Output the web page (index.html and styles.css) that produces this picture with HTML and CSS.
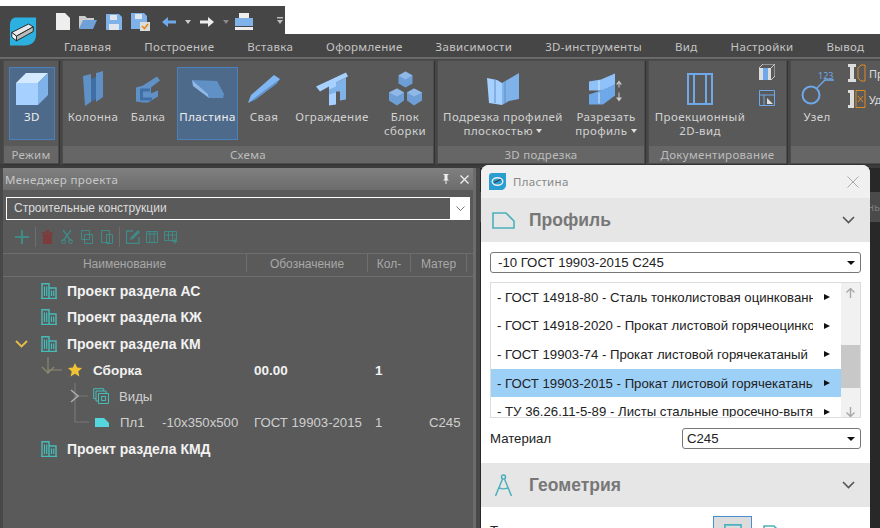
FILE: index.html
```html
<!DOCTYPE html>
<html lang="ru">
<head>
    <meta charset="UTF-8">
    <title>Менеджер проекта</title>
    <link rel="stylesheet" href="styles.css">
</head>
<body>
    <svg width="0" height="0" class="defs">
        <symbol id="building" viewBox="0 0 16 16">
            <path d="M1 15.500V.8h7v14.700M8 5h7v10.500M0 15.500h16" fill="none" stroke="#45bcb8" stroke-width="1.400"/>
            <path d="M3.500 3.500v9.500M5.700 3.500v9.500M10.500 7.500v5.500M12.700 7.500v5.500" stroke="#45bcb8" stroke-width="1.200"/>
        </symbol>
    </svg>

    <div class="qat">
        <svg class="logo" width="28" height="31" viewBox="0 0 30 32">
            <path d="M7 1h22v18c0 7-4 12-12 12H1V10C1 5 3 1 7 1z" fill="#2bb0e0"/>
            <path d="M3 17l18-9 5 3-18 10z" fill="#e8e8e8" stroke="#222" stroke-width="1"/>
            <path d="M3 17l5 4v5l-5-4z" fill="#fff" stroke="#222" stroke-width="1"/>
            <path d="M8 26l18-10v-5L8 21z" fill="#bbb" stroke="#222" stroke-width="1"/>
        </svg>
        <svg width="14" height="17" viewBox="0 0 14 17"><path d="M0 0h9l5 5v12H0z" fill="#eee"/></svg>
        <svg width="18" height="14" viewBox="0 0 18 14"><path d="M0 14V1h6l2 2h7v2H5z" fill="#ccc"/><path d="M0 14l4-9h14l-4 9z" fill="#6fa0d8"/></svg>
        <svg width="16" height="16" viewBox="0 0 16 16"><path d="M0 0h13l3 3v13H0z" fill="#7fb2e8"/><path d="M4 1h7v5H4zM3 10h10v6H3z" fill="#e0e6ee"/></svg>
        <svg width="19" height="18" viewBox="0 0 19 18"><path d="M0 0h13l3 3v13H0z" fill="#7fb2e8"/><path d="M4 1h7v5H4z" fill="#e0e6ee"/><path d="M9 9h10v9H9z" fill="#ddd"/><path d="M11 13l2.500 2.500L17 11" fill="none" stroke="#e08a1e" stroke-width="1.600"/></svg>
        <svg class="back" width="14" height="10" viewBox="0 0 14 10"><path d="M0 5l6-5v3.500h8v3H6V10z" fill="#6fa8e8"/></svg>
        <span class="drop"></span>
        <svg width="14" height="10" viewBox="0 0 14 10"><path d="M14 5L8 0v3.500H0v3h8V10z" fill="#eee"/></svg>
        <span class="drop dim"></span>
        <svg class="printer" width="18" height="17" viewBox="0 0 18 17"><path d="M4 0h10v5H4z" fill="#eee"/><path d="M0 5h18v8H0z" fill="#7fb2e8"/><path d="M0 14h18v3H0z" fill="#eee"/></svg>
        <svg class="more" width="6" height="9" viewBox="0 0 6 9"><path d="M0 0h6v1.500H0zM0 3h6L3 7z" fill="#bbb"/></svg>
    </div>

    <nav class="tabs">
        <span>Главная</span>
        <span>Построение</span>
        <span>Вставка</span>
        <span>Оформление</span>
        <span>Зависимости</span>
        <span>3D-инструменты</span>
        <span>Вид</span>
        <span>Настройки</span>
        <span>Вывод</span>
    </nav>

    <div class="ribbon">
        <section class="group group-mode">
            <div class="tools">
                <div class="tool active w46">
                    <svg width="32" height="32" viewBox="0 0 32 32"><path d="M0 10L10 0h22L22 10z" fill="#d5e9ff"/><path d="M0 10h22v22H0z" fill="#a6d0ff"/><path d="M22 10L32 0v22L22 32z" fill="#7fb2e8"/></svg>
                    <span>3D</span>
                </div>
            </div>
            <div class="caption">Режим</div>
        </section>

        <section class="group group-scheme">
            <div class="tools">
                <div class="tool w52">
                    <svg width="22" height="36" viewBox="0 0 22 36"><path d="M1 5l8-2v28l-6 4z" fill="#5f90c6"/><path d="M9 8l5-2v22l-5 3z" fill="#3f6fa5"/><path d="M14 2l7-2v26l-7 5z" fill="#5f90c6"/></svg>
                    <span>Колонна</span>
                </div>
                <div class="tool w58">
                    <svg width="26" height="27" viewBox="0 0 26 27"><path d="M1 12l7-2 14-9 3 4-9 7v6l7-3v6l-10 6H8L1 26z" fill="#5f90c6"/><path d="M5 13h10v3H8v6h9v3H5z" fill="#3f6fa5"/></svg>
                    <span>Балка</span>
                </div>
                <div class="tool active w61">
                    <svg width="33" height="18" viewBox="0 0 33 18"><path d="M1 0l25 1 7 13-1 4H18l-1-4z" fill="#5f90c6"/><path d="M1 0l16 14 1 4L2 6z" fill="#8fb8e6"/></svg>
                    <span>Пластина</span>
                </div>
                <div class="tool w52">
                    <svg width="32" height="28" viewBox="0 0 32 28"><path d="M0 28l3-8L26 0l6 4-4 5-20 15z" fill="#80b6f2"/><path d="M0 28l8-4L28 9l4-5z" fill="#5f90c6"/></svg>
                    <span>Свая</span>
                </div>
                <div class="tool w84">
                    <svg width="32" height="33" viewBox="0 0 32 33"><path d="M0 14L30 0l2 4-12 6v22l-7 1V14l-9 5z" fill="#a6d0ff"/><path d="M20 10l10-5v22l-6 1v-9h-4zM13 17l7-3v6l-7 2z" fill="#7fb2e8"/></svg>
                    <span>Ограждение</span>
                </div>
                <div class="tool-sep"></div>
                <div class="tool w54">
                    <svg width="33" height="35" viewBox="0 0 33 35"><path d="M16.500 0l7 4v8l-7 4-7-4V4z" fill="#6d9fd6"/><path d="M8 17l7 4v8l-7 5-8-5v-8z" fill="#6d9fd6"/><path d="M25 17l8 4v8l-8 5-7-5v-8z" fill="#6d9fd6"/><path d="M16.500 0l7 4-7 4-7-4zM8 17l7 4-7 4-8-4zM25 17l8 4-8 4-7-4z" fill="#8fb8e6"/></svg>
                    <span>Блок<br>сборки</span>
                </div>
            </div>
            <div class="caption">Схема</div>
        </section>

        <section class="group group-cut">
            <div class="tools">
                <div class="tool w124">
                    <svg width="32" height="32" viewBox="0 0 32 32"><path d="M0 5l10 2 5 3v22L2 30z" fill="#a6d0ff"/><path d="M15 10l17-10v26l-10 2-7 4z" fill="#7fb2e8"/><path d="M8 6v24M18 8v22" stroke="#5f90c6"/></svg>
                    <span>Подрезка профилей<br>плоскостью <i class="caret"></i></span>
                </div>
                <div class="tool w72">
                    <svg width="34" height="31" viewBox="0 0 34 31"><path d="M0 8l12-2 14-6v11L14 17H0z" fill="#8fc2fa"/><path d="M0 21l12-4 14-6v11l-12 9H0z" fill="#6fa8e8"/><path d="M10 7v10M10 19v11" stroke="#d5e9ff"/><path d="M30 7l-3 4h6zM30 28l-3-4h6z M29.500 10h1v4h-1zM29.500 19h1v6h-1z" fill="#ccc"/></svg>
                    <span>Разрезать<br>профиль <i class="caret"></i></span>
                </div>
            </div>
            <div class="caption">3D подрезка</div>
        </section>

        <section class="group group-doc">
            <div class="tools">
                <div class="tool w100">
                    <svg width="26" height="32" viewBox="0 0 26 32"><path d="M1 1h24v30H1zM7 1v30M19 1v30" fill="none" stroke="#6fa8e8" stroke-width="2"/></svg>
                    <span>Проекционный<br>2D-вид</span>
                </div>
                <div class="mini">
                    <svg width="16" height="16" viewBox="0 0 16 16"><path d="M0 4h12v12H0z" fill="#ddd"/><path d="M4 4h5v12H4z" fill="#6fa8e8"/><path d="M0 4l4-4h12v12l-4 4M12 4l4-4" fill="none" stroke="#ccc"/></svg>
                    <svg width="16" height="16" viewBox="0 0 16 16"><path d="M.5.500h15v15H.500zM.5 5h15M5 5v10" fill="none" stroke="#6fa8e8"/><path d="M8 14V8l6 6z" fill="#ddd"/></svg>
                </div>
            </div>
            <div class="caption">Документирование</div>
        </section>

        <section class="group group-node">
            <div class="tools">
                <div class="tool w46">
                    <div class="node-icon">
                        <svg width="33" height="32" viewBox="0 0 33 32"><circle cx="10" cy="22" r="8.500" fill="none" stroke="#6fa8e8" stroke-width="2"/><path d="M16 15l8-8h9" fill="none" stroke="#6fa8e8" stroke-width="1.300"/></svg>
                        <b class="node-num">123</b>
                    </div>
                    <span>Узел</span>
                </div>
                <div class="side-list">
                    <div><svg width="18" height="18" viewBox="0 0 18 18"><path d="M0 0h8v3H6v12h2v3H0v-3h2V3H0z" fill="#ddd"/><path d="M17 1h-4l-3 3v10l3 3h4z" fill="none" stroke="#e08a1e"/></svg>Пр</div>
                    <div><svg width="18" height="18" viewBox="0 0 18 18"><path d="M0 0h6v18H0v-3h2V3H0z" fill="#ddd"/><path d="M8 .500h9v17H8zM10 6l5 6M15 6l-5 6" fill="none" stroke="#e08a1e"/></svg>Уд</div>
                </div>
            </div>
            <div class="caption"></div>
        </section>
    </div>

    <div class="workspace">
        <aside class="panel">
            <div class="panel-title">
                <span>Менеджер проекта</span>
                <svg width="10" height="10" viewBox="0 0 10 10"><path d="M2.500 0h5v1h-1v4l1.500 1.500H2L3.500 5V1h-1zM4.500 6.500h1V10h-1z" fill="#eee"/></svg>
                <svg width="9" height="9" viewBox="0 0 9 9"><path d="M.5.500l8 8M8.500.500l-8 8" stroke="#eee" stroke-width="1.300"/></svg>
            </div>

            <div class="combo">
                <span>Строительные конструкции</span>
                <div class="combo-btn"><svg width="9" height="6" viewBox="0 0 9 6"><path d="M.5.500l4 4 4-4" fill="none" stroke="#777"/></svg></div>
            </div>

            <div class="toolbar">
                <svg width="14" height="14" viewBox="0 0 14 14"><path d="M7 0v14M0 7h14" stroke="#3f8b88" stroke-width="2"/></svg>
                <div class="bar-sep"></div>
                <svg width="11" height="14" viewBox="0 0 11 14"><path d="M0 2h11v1.500H0zM1 4h9v10H1z M4 0h3v2H4z" fill="#7a3c3c"/></svg>
                <svg width="12" height="14" viewBox="0 0 12 14"><path d="M2 0l8 11M10 0L2 11" stroke="#3f8b88" stroke-width="1.300"/><circle cx="2.500" cy="11.500" r="2" fill="none" stroke="#3f8b88"/><circle cx="9.500" cy="11.500" r="2" fill="none" stroke="#3f8b88"/></svg>
                <svg width="12" height="14" viewBox="0 0 12 14"><path d="M.5.500h8v9h-8zM3.500 4.500h8v9h-8z" fill="#5a5a5a" stroke="#3f8b88"/></svg>
                <svg width="12" height="14" viewBox="0 0 12 14"><path d="M.5.500h8v12h-8zM5.500 4.500h6v9h-6z" fill="#5a5a5a" stroke="#3f8b88"/></svg>
                <div class="bar-sep"></div>
                <svg width="14" height="14" viewBox="0 0 14 14"><path d="M13 7v6.500H.5V1H7" fill="none" stroke="#3f8b88" stroke-width="1.300"/><path d="M4 10l1-3 7-7 2 2-7 7z" fill="#3f8b88"/></svg>
                <svg class="tight" width="12" height="14" viewBox="0 0 12 14"><path d="M.5 1.500h11v11H.5zM4 1.500v11M8 1.500v11M.5 4h11" fill="none" stroke="#3f8b88"/></svg>
                <svg class="tight" width="14" height="14" viewBox="0 0 14 14"><path d="M.5 1.500h12v9H.5zM.5 5h12M4.500 1.500v9M8.500 1.500v9M11 8v6M8.500 11.500h5" fill="none" stroke="#3f8b88"/></svg>
            </div>

            <div class="head">
                <div>Наименование</div>
                <div>Обозначение</div>
                <div>Кол-</div>
                <div class="clip">Матер</div>
            </div>

            <div class="tree">
                <div class="row bold">
                    <div class="name"><span class="slot l0"></span><svg class="ico" width="16" height="16"><use href="#building"/></svg><span>Проект раздела АС</span></div>
                </div>
                <div class="row bold">
                    <div class="name"><span class="slot l0"></span><svg class="ico" width="16" height="16"><use href="#building"/></svg><span>Проект раздела КЖ</span></div>
                </div>
                <div class="row bold">
                    <div class="name">
                        <span class="slot l0"><svg class="chevron" width="13" height="8" viewBox="0 0 13 8"><path d="M1 1l5.500 5.500L12 1" fill="none" stroke="#e6bd4a" stroke-width="1.800"/></svg></span>
                        <svg class="ico" width="16" height="16"><use href="#building"/></svg><span>Проект раздела КМ</span>
                    </div>
                </div>
                <div class="row bold sub">
                    <div class="name">
                        <span class="slot l1"><svg class="link" width="65" height="26" viewBox="0 0 65 26"><path d="M45 0v17M45 13h14M39 10l6 6 6-6" fill="none" stroke="#8c8a70" stroke-width="1.200"/></svg></span>
                        <svg class="star" width="14" height="14" viewBox="0 0 14 14"><path d="M7 0l2.100 4.600 4.900.5-3.700 3.300 1.100 5L7 10.800l-4.400 2.600 1.100-5L0 5.100l4.900-.5z" fill="#f1c232"/></svg>
                        <span>Сборка</span>
                    </div>
                    <div>00.00</div>
                    <div>1</div>
                    <div></div>
                </div>
                <div class="row">
                    <div class="name">
                        <span class="slot l2"><svg class="link" width="90" height="26" viewBox="0 0 90 26"><path d="M72 0v26M72 13h13" fill="none" stroke="#777" stroke-width="1.200"/><path d="M68 7l7 6-7 6" fill="none" stroke="#aaa" stroke-width="1.600"/></svg></span>
                        <svg class="ico-view" width="16" height="16" viewBox="0 0 16 16"><path d="M.7.700h10v10H.700z" fill="none" stroke="#45bcb8"/><path d="M3 3h10v10H3z" fill="#5a5a5a" stroke="#45bcb8"/><path d="M5.500 5.500h10v10h-10z" fill="#5a5a5a" stroke="#45bcb8"/><path d="M8.500 8.500h4v4h-4z" fill="none" stroke="#45bcb8"/></svg>
                        <span>Виды</span>
                    </div>
                </div>
                <div class="row">
                    <div class="name">
                        <span class="slot l2"><svg class="link" width="90" height="26" viewBox="0 0 90 26"><path d="M72 0v13h14" fill="none" stroke="#777" stroke-width="1.200"/></svg></span>
                        <svg class="ico-plate" width="14" height="9" viewBox="0 0 14 9"><path d="M0 0h9l5 5v4H0z" fill="#54d6dc"/></svg>
                        <span class="mark">Пл1</span><span>-10x350x500</span>
                    </div>
                    <div>ГОСТ 19903-2015</div>
                    <div>1</div>
                    <div class="mat">С245</div>
                </div>
                <div class="row bold">
                    <div class="name"><span class="slot l0"></span><svg class="ico" width="16" height="16"><use href="#building"/></svg><span>Проект раздела КМД</span></div>
                </div>
            </div>
        </aside>
        <main class="canvas">
            <div class="canvas-tab">нь</div>
        </main>
    </div>

    <div class="dialog">
        <div class="dlg-title">
            <svg width="17" height="17" viewBox="0 0 16 16"><path d="M3 0h13v11c0 3-2 5-5 5H0V3c0-2 1-3 3-3z" fill="#2a9ed0"/><ellipse cx="8" cy="8" rx="5" ry="3.500" fill="none" stroke="#eee" stroke-width="1.300"/><path d="M5 9l6-3" stroke="#333"/></svg>
            <span>Пластина</span>
            <svg class="dlg-close" width="12" height="12" viewBox="0 0 12 12"><path d="M.5.500l11 11M11.500.500l-11 11" stroke="#aaa"/></svg>
        </div>

        <div class="sect">
            <svg width="23" height="17" viewBox="0 0 23 17"><path d="M1 1h13l8 8v7H1z" fill="none" stroke="#4cb0bc" stroke-width="1.600"/></svg>
            <span>Профиль</span>
            <svg class="sect-arrow" width="13" height="8" viewBox="0 0 13 8"><path d="M1 1l5.500 5.500L12 1" fill="none" stroke="#555" stroke-width="1.600"/></svg>
        </div>

        <div class="dlg-body">
            <div class="select full"><span>-10 ГОСТ 19903-2015 С245</span><i></i></div>

            <div class="list">
                <div class="items">
                    <div class="item"><span>- ГОСТ 14918-80 - Сталь тонколистовая оцинкованная</span><i></i></div>
                    <div class="item"><span>- ГОСТ 14918-2020 - Прокат листовой горячеоцинкованный</span><i></i></div>
                    <div class="item"><span>- ГОСТ 19903-74 - Прокат листовой горячекатаный</span><i></i></div>
                    <div class="item sel"><span>- ГОСТ 19903-2015 - Прокат листовой горячекатаный</span><i></i></div>
                    <div class="item"><span>- ТУ 36.26.11-5-89 - Листы стальные просечно-вытяжные</span><i></i></div>
                </div>
                <div class="scroll">
                    <svg width="9" height="10" viewBox="0 0 9 10"><path d="M4.500 10V1M.5 4.500l4-4 4 4" fill="none" stroke="#a8a8a8" stroke-width="1.400"/></svg>
                    <div class="thumb"></div>
                    <svg width="9" height="10" viewBox="0 0 9 10"><path d="M4.500 0v9M.5 5.500l4 4 4-4" fill="none" stroke="#a8a8a8" stroke-width="1.400"/></svg>
                </div>
            </div>

            <div class="field">
                <span>Материал</span>
                <div class="select"><span>С245</span><i></i></div>
            </div>
        </div>

        <div class="sect">
            <svg width="23" height="22" viewBox="0 0 20 22"><circle cx="10" cy="3" r="2" fill="none" stroke="#4cb0bc" stroke-width="1.500"/><path d="M9 5L2 22M11 5l7 17M6 14c2 1 6 1 8 0" fill="none" stroke="#4cb0bc" stroke-width="1.500"/></svg>
            <span>Геометрия</span>
            <svg class="sect-arrow" width="13" height="8" viewBox="0 0 13 8"><path d="M1 1l5.500 5.500L12 1" fill="none" stroke="#555" stroke-width="1.600"/></svg>
        </div>

        <div class="dlg-last">
            <span>Тип</span>
            <div class="toggle"><svg width="18" height="18" viewBox="0 0 20 20"><path d="M1 1h18v18H1z" fill="none" stroke="#4cb0bc" stroke-width="1.800"/></svg></div>
            <svg class="toggle-2" width="20" height="20" viewBox="0 0 20 20"><path d="M1 1h10l8 8v10H1z" fill="none" stroke="#4cb0bc" stroke-width="1.600"/></svg>
        </div>
    </div>
</body>
</html>
```

FILE: styles.css
```css
* {
    margin: 0;
    padding: 0;
    box-sizing: border-box;
}

body {
    width: 880px;
    height: 528px;
    background: #fff;
    overflow: hidden;
    position: relative;
    font-family: 'Noto Sans', sans-serif;
    display: flex;
    flex-direction: column;
}

svg {
    display: block;
    flex-shrink: 0;
}

.defs {
    position: absolute;
}

/* title bar */
.qat {
    margin-top: 6px;
    width: 285px;
    height: 28px;
    background: #464646;
    display: flex;
    align-items: center;
    gap: 9px;
    padding-left: 9px;
    padding-top: 3px;
}

.logo {
    align-self: flex-start;
    margin: 7px 10px 0 0;
    position: relative;
    z-index: 1;
}

.back {
    margin-left: 3px;
}

.printer {
    margin-left: -3px;
}

.drop {
    width: 0;
    height: 0;
    border: 3px solid transparent;
    border-top: 4px solid #ccc;
    border-bottom: 0;
}

.drop.dim {
    border-top-color: #888;
}

.more {
    margin-left: 15px;
}

/* tabs */
.tabs {
    height: 25px;
    background: #464646;
    display: flex;
    align-items: center;
    gap: 33px;
    padding: 2px 0 0 64px;
    font-size: 11.5px;
    letter-spacing: .3px;
    color: #c4c4c4;
    white-space: nowrap;
    border-bottom: 2px solid #6a6a6a;
}

/* ribbon */
.ribbon {
    height: 109px;
    background: #464646;
    display: flex;
    gap: 3px;
    padding: 1px 0 0 3px;
    border-bottom: 4px solid #3c3c3c;
}

.group {
    background: #595959;
    display: flex;
    flex-direction: column;
    flex-shrink: 0;
    border: 1px solid #4c4c4c;
    box-shadow: 1px 1px 0 #333;
}

.group-mode { width: 56px; }
.group-scheme { width: 372px; }
.group-cut { width: 208px; }
.group-doc { width: 139px; }
.group-node { width: 100px; }

.tools {
    flex: 1;
    display: flex;
    padding: 6px 5px 5px;
}

.group-scheme .tools {
    padding-left: 4px;
}

.group-cut .tools {
    padding-left: 3px;
    gap: 5px;
}

.group-doc .tools {
    padding-left: 1px;
}

.group-node .tools {
    padding-left: 3px;
}

.caption {
    height: 17px;
    background: #666;
    color: #bdbdbd;
    font-size: 11.5px;
    letter-spacing: .3px;
    line-height: 17px;
    text-align: center;
}

.tool {
    height: 73px;
    display: flex;
    flex-direction: column;
    align-items: center;
    color: #d2d2d2;
    font-size: 11.5px;
    letter-spacing: .4px;
    line-height: 14px;
    text-align: center;
    border: 1px solid transparent;
    white-space: nowrap;
    flex-shrink: 0;
}

.tool svg {
    height: 36px;
    margin: 3px 0;
}

.tool.active {
    background: #4e6a8a;
    border-color: #4a80bd;
    color: #eee;
}

.w46 { width: 46px; }
.w52 { width: 52px; }
.w54 { width: 54px; }
.w58 { width: 58px; }
.w61 { width: 61px; }
.w72 { width: 72px; }
.w84 { width: 84px; }
.w100 { width: 100px; }
.w124 { width: 124px; }

.tool-sep {
    width: 1px;
    height: 70px;
    background: #777;
    margin: 1px 0 0 4px;
}

.caret {
    display: inline-block;
    width: 0;
    height: 0;
    border: 3px solid transparent;
    border-top: 4px solid #ddd;
    border-bottom: 0;
    vertical-align: 2px;
}

.mini {
    display: flex;
    flex-direction: column;
    gap: 10px;
    margin-top: -3px;
    padding-left: 9px;
}

.node-icon {
    position: relative;
}

.node-num {
    position: absolute;
    top: 3px;
    right: 0;
    color: #6fa8e8;
    font-size: 9px;
    line-height: 10px;
    font-weight: 400;
    letter-spacing: 0;
}

.side-list {
    display: flex;
    flex-direction: column;
    gap: 8px;
    margin-top: -3px;
    padding-left: 8px;
    color: #ddd;
    font-size: 11px;
}

.side-list div {
    display: flex;
    align-items: center;
    gap: 3px;
}

/* bottom part */
.workspace {
    flex: 1;
    display: flex;
    background: #484848;
    padding-left: 3px;
    min-height: 0;
}

.panel {
    width: 473px;
    background: #5a5a5a;
    border-right: 3px solid #6c6c6c;
    font-family: 'Liberation Sans', sans-serif;
}

.canvas {
    flex: 1;
    background: #282828;
    margin-left: 4px;
    padding-top: 24px;
}

.canvas-tab {
    height: 30px;
    background: #4a4a4a;
    color: #7a7a7a;
    font-family: 'Noto Sans', sans-serif;
    font-size: 11px;
    line-height: 30px;
    text-align: right;
}

.panel-title {
    height: 22px;
    background: linear-gradient(#808080, #6c6c6c);
    color: #c8c8c8;
    font-family: 'Noto Sans', sans-serif;
    font-size: 11.5px;
    letter-spacing: .4px;
    display: flex;
    align-items: center;
    gap: 9px;
    padding: 0 4px 0 2px;
}

.panel-title span {
    flex: 1;
}

.combo {
    margin: 7px 3px 0 3px;
    height: 23px;
    border: 1px solid #fff;
    border-width: 1px 0 1px 1px;
    color: #dcdcdc;
    font-size: 12px;
    line-height: 21px;
    padding-left: 7px;
    display: flex;
}

.combo span {
    flex: 1;
}

.combo-btn {
    width: 20px;
    margin-top: -1px;
    height: 23px;
    background: #fff;
    display: flex;
    align-items: center;
    justify-content: center;
}

.toolbar {
    height: 34px;
    display: flex;
    align-items: center;
    gap: 8px;
    padding-left: 12px;
    border-bottom: 1px solid #6e6e6e;
}

.bar-sep {
    width: 1px;
    height: 20px;
    background: #6e6e6e;
    margin: 0 -2px;
}

.toolbar .tight {
    margin-left: -2px;
}

.head {
    height: 23px;
    display: grid;
    grid-template-columns: 244px 121px 43px 56px;
    font-size: 12px;
    color: #a8a8a8;
    text-align: center;
    line-height: 20px;
    border-bottom: 1px solid #6e6e6e;
}

.head div {
    border-right: 1px solid #6e6e6e;
    height: 18px;
    overflow: hidden;
}

.tree {
    padding-top: 1px;
}

.row {
    height: 26.3px;
    display: grid;
    grid-template-columns: 251px 121px 54px 40px;
    align-items: center;
    color: #cfcfcf;
    font-size: 13.2px;
    white-space: nowrap;
}

.row.bold {
    font-weight: 700;
    font-size: 14px;
    color: #f2f2f2;
}

.row.sub {
    font-size: 13.500px;
}

.name {
    display: flex;
    align-items: center;
    height: 100%;
}

.slot {
    display: block;
    height: 100%;
    flex-shrink: 0;
    position: relative;
}

.l0 { width: 38px; }
.l1 { width: 65px; }
.l2 { width: 90px; }

.link {
    position: absolute;
    left: 0;
    top: 0;
}

.chevron {
    position: absolute;
    left: 12px;
    top: 9px;
}

.ico {
    margin-right: 10px;
}

.star {
    margin-right: 11px;
}

.ico-view {
    margin-right: 10px;
}

.ico-plate {
    margin: 0 11px 0 2px;
}

.mark {
    width: 42px;
}

/* dialog */
.dialog {
    position: absolute;
    left: 481px;
    top: 165px;
    width: 389px;
    height: 380px;
    background: #fff;
    border-radius: 8px 8px 0 0;
    font-family: 'Liberation Sans', sans-serif;
    overflow: hidden;
}

.dlg-title {
    height: 33px;
    background: #f0f0f0;
    display: flex;
    align-items: center;
    gap: 7px;
    padding: 0 11px 0 8px;
    font-family: 'Noto Sans', sans-serif;
    font-size: 11.5px;
    letter-spacing: .3px;
    color: #888;
}

.dlg-close {
    margin-left: auto;
}

.sect {
    height: 44px;
    background: #e6e6e6;
    display: flex;
    align-items: center;
    padding: 0 15px 0 11px;
    color: #777;
    font-size: 17.5px;
    font-weight: 700;
}

.sect span {
    margin-left: 14px;
}

.sect-arrow {
    margin-left: auto;
}

.dlg-body {
    height: 221px;
    padding: 10px 9px 0;
    font-size: 13.2px;
    color: #222;
}

.select {
    height: 21px;
    border: 1px solid #777;
    border-radius: 3px;
    display: flex;
    align-items: center;
    justify-content: space-between;
    padding: 0 5px 0 7px;
    background: #fff;
}

.select i {
    width: 0;
    height: 0;
    border: 4px solid transparent;
    border-top: 4px solid #111;
    border-bottom: 0;
}

.list {
    margin-top: 9px;
    height: 136px;
    border: 1px solid #dcdcdc;
    display: flex;
    overflow: hidden;
}

.items {
    flex: 1;
}

.item {
    height: 28.6px;
    display: flex;
    align-items: center;
    padding-left: 6px;
    white-space: nowrap;
}

.item span {
    width: 316px;
    overflow: hidden;
}

.item i {
    width: 0;
    height: 0;
    margin-left: 11px;
    border: 3.500px solid transparent;
    border-left: 6px solid #111;
    border-right: 0;
}

.item.sel {
    background: #9dd0f7;
}

.scroll {
    width: 19px;
    background: #f1f1f1;
    display: flex;
    flex-direction: column;
    align-items: center;
    padding-top: 5px;
}

.thumb {
    width: 100%;
    height: 43px;
    background: #c8c8c8;
    margin: 47px 0 19px;
}

.field {
    display: flex;
    align-items: center;
    justify-content: space-between;
    margin-top: 10px;
}

.field .select {
    width: 179px;
    padding-left: 4px;
}

.dlg-last {
    display: flex;
    align-items: flex-start;
    padding: 9px 0 0 9px;
    font-size: 13.2px;
    color: #222;
}

.dlg-last span {
    width: 223px;
    margin-top: 7px;
}

.toggle {
    width: 39px;
    height: 30px;
    background: #dcdcdc;
    border: 1px solid #4a90d0;
    display: flex;
    justify-content: center;
    padding-top: 7px;
}

.toggle-2 {
    margin: 9px 0 0 11px;
}
```
